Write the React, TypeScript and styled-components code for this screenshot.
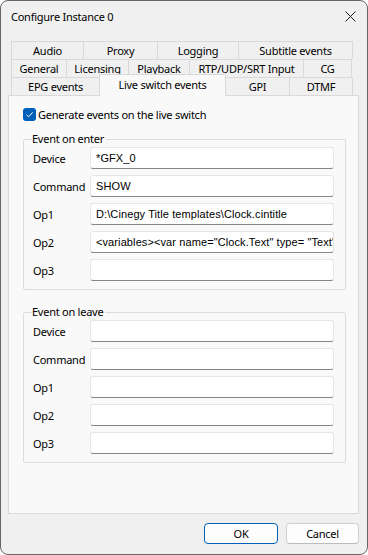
import React from 'react';
import styled, { createGlobalStyle } from 'styled-components';

const GlobalStyle = createGlobalStyle`
  html, body {
    margin: 0;
    padding: 0;
    background: #ffffff;
  }
  body {
    font-family: "Segoe UI", "Noto Sans", "Liberation Sans", sans-serif;
    font-size: 11px;
    letter-spacing: -0.25px;
    color: #000000;
  }
`;

type TabDef = { label: string; width: number; selected?: boolean };

const tabRows: TabDef[][] = [
  [
    { label: 'Audio', width: 73 },
    { label: 'Proxy', width: 75 },
    { label: 'Logging', width: 82 },
    { label: 'Subtitle events', width: 115 },
  ],
  [
    { label: 'General', width: 56 },
    { label: 'Licensing', width: 63 },
    { label: 'Playback', width: 62 },
    { label: 'RTP/UDP/SRT Input', width: 115 },
    { label: 'CG', width: 49 },
  ],
  [
    { label: 'EPG events', width: 89 },
    { label: 'Live switch events', width: 127, selected: true },
    { label: 'GPI', width: 65 },
    { label: 'DTMF', width: 64 },
  ],
];

type FieldDef = { label: string; value?: string };

const enterFields: FieldDef[] = [
  { label: 'Device', value: '*GFX_0' },
  { label: 'Command', value: 'SHOW' },
  { label: 'Op1', value: 'D:\\Cinegy Title templates\\Clock.cintitle' },
  { label: 'Op2', value: '<variables><var name="Clock.Text" type= "Text" value="" /></variables>' },
  { label: 'Op3', value: '' },
];

const leaveFields: FieldDef[] = [
  { label: 'Device' },
  { label: 'Command' },
  { label: 'Op1' },
  { label: 'Op2' },
  { label: 'Op3' },
];

const Window = styled.div`
  width: 368px;
  height: 555px;
  box-sizing: border-box;
  border: 1px solid #666666;
  border-radius: 8px;
  background: #f0f0f0;
  display: flex;
  flex-direction: column;
  overflow: hidden;
`;

const TitleBar = styled.div`
  height: 31px;
  flex: none;
  display: flex;
  align-items: center;
  justify-content: space-between;
  padding: 0 10px 0 10px;
`;

const CloseButton = styled.div`
  width: 12px;
  height: 12px;
  display: flex;
  align-items: center;
  justify-content: center;
  margin-right: 1px;
`;

const Body = styled.div`
  flex: 1;
  display: flex;
  flex-direction: column;
  padding: 9px 8px 0 7px;
`;

const TabStrip = styled.div`
  display: flex;
  flex-direction: column;
  padding-left: 3px;
`;

const TabRow = styled.div`
  display: flex;
  align-items: flex-end;
  height: 18px;
`;

const Tab = styled.div<{ $width: number; $selected?: boolean }>`
  box-sizing: border-box;
  width: ${(p) => p.$width}px;
  height: ${(p) => (p.$selected ? 22 : 18)}px;
  margin-right: -1px;
  margin-bottom: ${(p) => (p.$selected ? -1 : 0)}px;
  border: 1px solid #d9d9d9;
  border-bottom: none;
  background: ${(p) => (p.$selected ? '#f9f9f9' : '#f0f0f0')};
  display: flex;
  align-items: ${(p) => (p.$selected ? 'flex-start' : 'center')};
  padding-top: ${(p) => (p.$selected ? 2 : 1)}px;
  justify-content: center;
  white-space: nowrap;
  line-height: 16px;
  position: ${(p) => (p.$selected ? 'relative' : 'static')};
  z-index: ${(p) => (p.$selected ? 2 : 'auto')};
`;

const Panel = styled.div`
  box-sizing: border-box;
  height: 419px;
  border: 1px solid #d9d9d9;
  background: #f9f9f9;
  padding: 12px 12px 0 14px;
  display: flex;
  flex-direction: column;
`;

const CheckRow = styled.label`
  display: flex;
  align-items: center;
  gap: 2px;
  height: 13px;
  line-height: 13px;
`;

const CheckBox = styled.span`
  width: 13px;
  height: 13px;
  box-sizing: border-box;
  border-radius: 3px;
  background: #005fb8;
  display: flex;
  align-items: center;
  justify-content: center;
  flex: none;
`;

const Group = styled.fieldset<{ $top: number }>`
  margin: ${(p) => p.$top}px 0 0 0;
  padding: 0 11px 8px 8px;
  border: 1px solid #dcdcdc;
  border-radius: 2px;
  display: grid;
  grid-template-columns: 58px 1fr;
  row-gap: 6px;
  min-width: 0;
`;

const Legend = styled.legend`
  padding: 0 2px 0 0;
  margin-left: 0;
  line-height: 16px;
  height: 16px;
`;

const FieldLabel = styled.span`
  display: flex;
  align-items: center;
  height: 22px;
  padding-left: 1px;
`;

const TextBox = styled.input`
  box-sizing: border-box;
  width: 244px;
  height: 22px;
  border: 1px solid #e6e6e6;
  border-bottom-color: #878787;
  border-radius: 3px;
  background: #ffffff;
  padding: 0 0 1px 5px;
  font-family: "Liberation Sans", Arial, sans-serif;
  font-size: 11px;
  letter-spacing: 0.1px;
  color: #000000;
  outline: none;
`;

const Footer = styled.div`
  display: flex;
  justify-content: flex-end;
  gap: 8px;
  padding-top: 9px;
`;

const Button = styled.button<{ $primary?: boolean; $width: number }>`
  box-sizing: border-box;
  width: ${(p) => p.$width}px;
  height: 21px;
  border-radius: 4px;
  border: 1px solid ${(p) => (p.$primary ? '#005fb8' : '#d0d0d0')};
  border-bottom-color: ${(p) => (p.$primary ? '#005fb8' : '#bcbcbc')};
  background: #fdfdfd;
  font: inherit;
  letter-spacing: inherit;
  color: #000000;
  padding: 0 0 1px 0;
`;

function FieldGroup({ title, fields, top }: { title: string; fields: FieldDef[]; top: number }) {
  return (
    <Group $top={top}>
      <Legend>{title}</Legend>
      {fields.map((f) => (
        <React.Fragment key={f.label}>
          <FieldLabel>{f.label}</FieldLabel>
          <TextBox value={f.value ?? ''} readOnly />
        </React.Fragment>
      ))}
    </Group>
  );
}

export default function App() {
  return (
    <>
      <GlobalStyle />
      <Window>
        <TitleBar>
          <span>Configure Instance 0</span>
          <CloseButton>
            <svg width="11" height="11" viewBox="0 0 11 11">
              <path d="M0.5 0.5 L10.5 10.5 M10.5 0.5 L0.5 10.5" stroke="#1a1a1a" strokeWidth="1" fill="none" />
            </svg>
          </CloseButton>
        </TitleBar>
        <Body>
          <TabStrip>
            {tabRows.map((row, i) => (
              <TabRow key={i}>
                {row.map((t) => (
                  <Tab key={t.label} $width={t.width} $selected={t.selected}>
                    {t.label}
                  </Tab>
                ))}
              </TabRow>
            ))}
          </TabStrip>
          <Panel>
            <CheckRow>
              <CheckBox>
                <svg width="9" height="9" viewBox="0 0 9 9">
                  <path d="M1.5 4.8 L3.6 6.8 L7.6 2.4" stroke="#ffffff" strokeWidth="1" fill="none" />
                </svg>
              </CheckBox>
              <span>Generate events on the live switch</span>
            </CheckRow>
            <FieldGroup title="Event on enter" fields={enterFields} top={10} />
            <FieldGroup title="Event on leave" fields={leaveFields} top={14} />
          </Panel>
          <Footer>
            <Button $primary $width={74}>OK</Button>
            <Button $width={73}>Cancel</Button>
          </Footer>
        </Body>
      </Window>
    </>
  );
}
